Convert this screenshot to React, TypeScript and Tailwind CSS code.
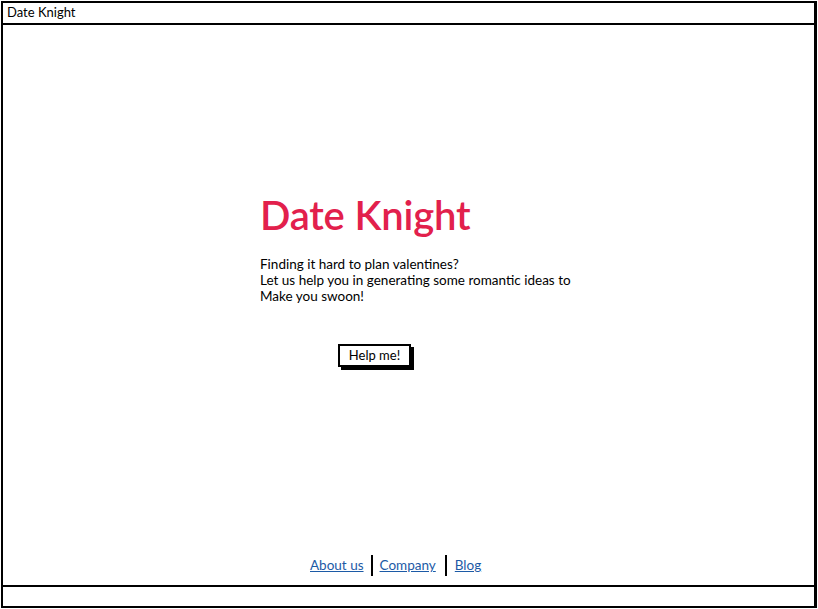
import React from "react";

export default function App() {
  const font = { fontFamily: "Lato, 'Open Sans', sans-serif" };
  return (
    <div className="w-[818px] h-[609px] bg-white p-px" style={font}>
      <div className="w-[816px] h-[607px] border-2 border-black border-r-[3px] flex flex-col">
        <div className="h-[22px] border-b-2 border-black flex items-center pl-[4px] text-[13px] text-black">
          Date Knight
        </div>
        <div className="flex-1 flex flex-col">
          <div className="pl-[257px] pt-[166px]">
            <div className="text-[40px] leading-[48px] text-[#e2204c] font-semibold tracking-[-0.2px]">
              Date Knight
            </div>
            <div className="mt-[17px] text-[13.5px] leading-[16px] text-black">
              <div>Finding it hard to plan valentines?</div>
              <div>Let us help you in generating some romantic ideas to</div>
              <div>Make you swoon!</div>
            </div>
            <div className="mt-[40px] ml-[78px]">
              <button className="w-[73px] h-[23px] bg-white border-2 border-black shadow-[3px_3px_0_0_#000] text-[13px] text-black flex items-center justify-center">
                Help me!
              </button>
            </div>
          </div>
          <div className="mt-auto mb-[9px] flex items-center pl-[307px] text-[13.5px]">
            <a className="text-[#1c5aa6] underline pr-[7px]" href="#">About us</a>
            <span className="w-[2px] h-[21px] bg-black"></span>
            <a className="text-[#1c5aa6] underline pl-[7px] pr-[9px]" href="#">Company</a>
            <span className="w-[2px] h-[21px] bg-black"></span>
            <a className="text-[#1c5aa6] underline pl-[8px]" href="#">Blog</a>
          </div>
        </div>
        <div className="h-[21px] border-t-2 border-black"></div>
      </div>
    </div>
  );
}
